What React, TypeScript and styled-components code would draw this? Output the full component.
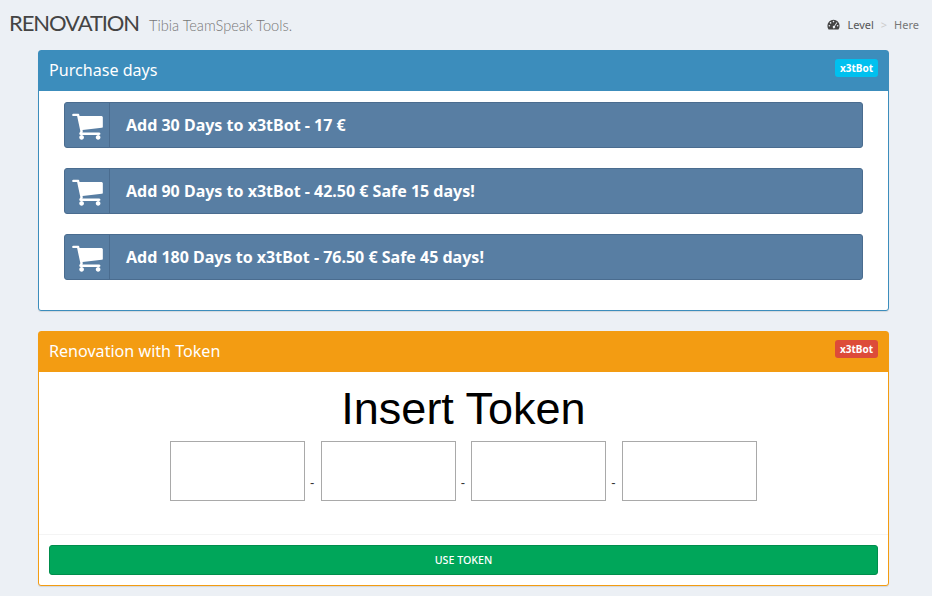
import React from "react";
import styled, { createGlobalStyle } from "styled-components";

const Global = createGlobalStyle`
  html, body { margin: 0; padding: 0; background: #ecf0f5; }
  body { font-family: "Noto Sans", "Liberation Sans", sans-serif; color: #333; overflow: hidden; }
  * { box-sizing: border-box; }
`;

const Page = styled.div`
  width: 932px;
  height: 596px;
  display: flex;
  flex-direction: column;
  overflow: hidden;
`;

const Header = styled.header`
  height: 50px;
  padding: 0 13px 4px 9px;
  display: flex;
  align-items: center;
  justify-content: space-between;
`;

const TitleWrap = styled.div`
  display: flex;
  align-items: baseline;
  gap: 10px;
`;

const Title = styled.h1`
  margin: 0;
  font-family: "Lato", sans-serif;
  font-size: 22px;
  font-weight: 400;
  letter-spacing: -1.1px;
  line-height: 28px;
  color: #444;
`;

const Subtitle = styled.small`
  font-family: "Lato", sans-serif;
  font-size: 14.6px;
  font-weight: 300;
  color: #777;
`;

const Crumbs = styled.div`
  margin-top: 2px;
  display: flex;
  align-items: center;
  font-size: 11px;
  color: #555;
`;

const CrumbIcon = styled.svg`
  width: 13px;
  height: 13px;
  margin-right: 7px;
  fill: #444;
`;

const Sep = styled.span`
  margin: 0 7px;
  color: #ccc;
`;

const CrumbLast = styled.span`
  color: #777;
`;

const Content = styled.main`
  padding: 0 43px 0 38px;
  display: flex;
  flex-direction: column;
  gap: 20px;
`;

const Panel = styled.section<{ $color: string }>`
  background: #fff;
  border: 1px solid ${(p) => p.$color};
  border-radius: 3px;
  box-shadow: 0 1px 1px rgba(0, 0, 0, 0.1);
`;

const PanelHead = styled.div<{ $color: string }>`
  height: 40px;
  padding: 0 10px 2px;
  background: ${(p) => p.$color};
  display: flex;
  align-items: center;
  justify-content: space-between;
  color: #fff;
`;

const PanelTitle = styled.h3`
  margin: 0;
  font-family: "Noto Sans", sans-serif;
  font-size: 16.1px;
  font-weight: 400;
  line-height: 20px;
  color: #fff;
`;

const Badge = styled.span<{ $color: string }>`
  align-self: flex-start;
  margin-top: 8px;
  height: 18px;
  width: 43px;
  display: flex;
  align-items: center;
  justify-content: center;
  border-radius: 3px;
  background: ${(p) => p.$color};
  color: #fff;
  font-family: "Noto Sans", sans-serif;
  font-size: 10px;
  font-weight: 700;
`;

const PurchaseBody = styled.div`
  padding: 11px 25px 30px;
  display: flex;
  flex-direction: column;
  gap: 20px;
`;

const Buy = styled.a`
  height: 46px;
  display: flex;
  align-items: center;
  background: #587ea3;
  border: 1px solid #4a6c8f;
  border-radius: 3px;
  color: #fff;
  font-size: 16px;
  font-weight: 700;
`;

const BuyIcon = styled.span`
  width: 45px;
  height: 100%;
  flex: none;
  display: flex;
  align-items: center;
  justify-content: center;
  border-right: 1px solid #4a6c8f;
`;

const CartSvg = styled.svg`
  width: 33px;
  height: 33px;
  margin-top: 1px;
  fill: #fff;
`;

const BuyLabel = styled.span`
  padding-left: 16px;
`;

const TokenBody = styled.div`
  height: 162px;
  display: flex;
  flex-direction: column;
  align-items: center;
`;

const TokenTitle = styled.h1`
  margin: 11px 0 0;
  font-family: "Liberation Sans", Arial, sans-serif;
  font-size: 45px;
  font-weight: 400;
  line-height: 52px;
  color: #000;
`;

const Fields = styled.div`
  margin-top: 6px;
  display: flex;
  align-items: flex-end;
  gap: 5px;
`;

const Field = styled.input`
  width: 135px;
  height: 60px;
  padding: 0 4px;
  border: 1px solid #a9a9a9;
  background: #fff;
  outline: none;
`;

const Dash = styled.span`
  width: 5.67px;
  margin-bottom: 8px;
  font-family: "Liberation Sans", sans-serif;
  font-size: 13px;
  line-height: 20px;
  color: #333;
  text-align: left;
`;

const PanelFoot = styled.div`
  padding: 10px;
  border-top: 1px solid #f4f4f4;
`;

const UseToken = styled.button`
  width: 100%;
  height: 30px;
  display: block;
  background: #00a65a;
  border: 1px solid #008d4c;
  border-radius: 3px;
  color: #fff;
  font-family: "Noto Sans", sans-serif;
  font-size: 10.7px;
  font-weight: 500;
`;

const offers = [
  "Add 30 Days to x3tBot - 17 €",
  "Add 90 Days to x3tBot - 42.50 € Safe 15 days!",
  "Add 180 Days to x3tBot - 76.50 € Safe 45 days!",
];

const Cart = () => (
  <CartSvg viewBox="0 0 1792 1792" aria-hidden="true">
    <path d="M704 1536q0 52-38 90t-90 38-90-38-38-90 38-90 90-38 90 38 38 90zm896 0q0 52-38 90t-90 38-90-38-38-90 38-90 90-38 90 38 38 90zm128-1088v512q0 24-16.5 42.5T1671 1024L627 1146q13 60 13 70 0 16-24 64h920q26 0 45 19t19 45-19 45-45 19H512q-26 0-45-19t-19-45q0-11 8-31.5t16-36 21.5-40T509 1207L332 384H128q-26 0-45-19t-19-45 19-45 45-19h256q16 0 28.5 6.5T432 278t13 24.5 8 26 5.5 29.5 4.5 26h1201q26 0 45 19t19 45z" />
  </CartSvg>
);

const Gauge = () => (
  <CrumbIcon viewBox="0 0 16 16" aria-hidden="true">
    <path
      fillRule="evenodd"
      d="M8 2a7.5 7.5 0 0 0-7.5 7.5c0 1.7.5 3.2 1.4 4.5h12.2a7.5 7.5 0 0 0 1.4-4.5A7.5 7.5 0 0 0 8 2zM8 3.4a1 1 0 1 1 0 2 1 1 0 0 1 0-2zM4.4 5a1 1 0 1 1 0 2 1 1 0 0 1 0-2zm7.4.3.9.6-2.9 4.4a1.5 1.5 0 1 1-1-.6l3-4.4zM2.9 8.6a1 1 0 1 1 0 2 1 1 0 0 1 0-2zm10.2 0a1 1 0 1 1 0 2 1 1 0 0 1 0-2z"
    />
  </CrumbIcon>
);

export default function App() {
  return (
    <Page>
      <Global />
      <Header>
        <TitleWrap>
          <Title>RENOVATION</Title>
          <Subtitle>Tibia TeamSpeak Tools.</Subtitle>
        </TitleWrap>
        <Crumbs>
          <Gauge />
          <span>Level</span>
          <Sep>&gt;</Sep>
          <CrumbLast>Here</CrumbLast>
        </Crumbs>
      </Header>
      <Content>
        <Panel $color="#3c8dbc">
          <PanelHead $color="#3c8dbc">
            <PanelTitle>Purchase days</PanelTitle>
            <Badge $color="#00c0ef">x3tBot</Badge>
          </PanelHead>
          <PurchaseBody>
            {offers.map((o) => (
              <Buy key={o}>
                <BuyIcon>
                  <Cart />
                </BuyIcon>
                <BuyLabel>{o}</BuyLabel>
              </Buy>
            ))}
          </PurchaseBody>
        </Panel>
        <Panel $color="#f39c12">
          <PanelHead $color="#f39c12">
            <PanelTitle>Renovation with Token</PanelTitle>
            <Badge $color="#dd4b39">x3tBot</Badge>
          </PanelHead>
          <TokenBody>
            <TokenTitle>Insert Token</TokenTitle>
            <Fields>
              <Field />
              <Dash>-</Dash>
              <Field />
              <Dash>-</Dash>
              <Field />
              <Dash>-</Dash>
              <Field />
            </Fields>
          </TokenBody>
          <PanelFoot>
            <UseToken>USE TOKEN</UseToken>
          </PanelFoot>
        </Panel>
      </Content>
    </Page>
  );
}
